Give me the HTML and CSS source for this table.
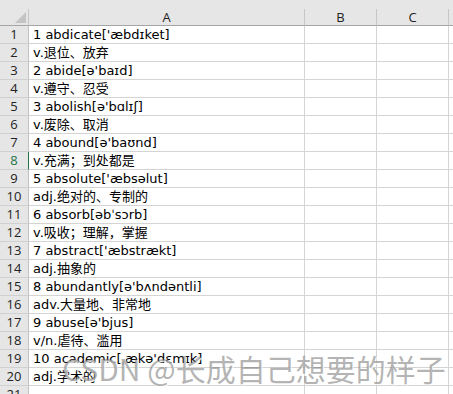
FILE: index.html
```html
<!DOCTYPE html>
<html lang="zh">
<head>
<meta charset="utf-8">
<title>Sheet</title>
<link rel="stylesheet" href="styles.css">
</head>
<body>
<div class="sheet">
  <div class="colhead">
    <div class="corner"><svg class="tri" width="11" height="11" viewBox="0 0 11 11"><polygon points="11,0 11,11 0,11" fill="#c4c4c4"/></svg></div>
    <div class="ch">A</div>
    <div class="ch">B</div>
    <div class="ch">C</div>
    <div class="ch last"></div>
  </div>
  <div class="row"><div class="rh">1</div><div class="cell">1 abdicate['æbdɪket]</div><div class="cell"></div><div class="cell"></div><div class="cell"></div></div>
  <div class="row"><div class="rh">2</div><div class="cell">v.退位、放弃</div><div class="cell"></div><div class="cell"></div><div class="cell"></div></div>
  <div class="row"><div class="rh">3</div><div class="cell">2 abide[ə'baɪd]</div><div class="cell"></div><div class="cell"></div><div class="cell"></div></div>
  <div class="row"><div class="rh">4</div><div class="cell">v.遵守、忍受</div><div class="cell"></div><div class="cell"></div><div class="cell"></div></div>
  <div class="row"><div class="rh">5</div><div class="cell">3 abolish[ə'bɑlɪʃ]</div><div class="cell"></div><div class="cell"></div><div class="cell"></div></div>
  <div class="row"><div class="rh">6</div><div class="cell">v.废除、取消</div><div class="cell"></div><div class="cell"></div><div class="cell"></div></div>
  <div class="row"><div class="rh">7</div><div class="cell">4 abound[ə'baʊnd]</div><div class="cell"></div><div class="cell"></div><div class="cell"></div></div>
  <div class="row"><div class="rh active">8</div><div class="cell">v.充满；到处都是</div><div class="cell"></div><div class="cell"></div><div class="cell"></div></div>
  <div class="row"><div class="rh">9</div><div class="cell">5 absolute['æbsəlut]</div><div class="cell"></div><div class="cell"></div><div class="cell"></div></div>
  <div class="row"><div class="rh">10</div><div class="cell">adj.绝对的、专制的</div><div class="cell"></div><div class="cell"></div><div class="cell"></div></div>
  <div class="row"><div class="rh">11</div><div class="cell">6 absorb[əbˈsɔrb]</div><div class="cell"></div><div class="cell"></div><div class="cell"></div></div>
  <div class="row"><div class="rh">12</div><div class="cell">v.吸收；理解，掌握</div><div class="cell"></div><div class="cell"></div><div class="cell"></div></div>
  <div class="row"><div class="rh">13</div><div class="cell">7 abstract['æbstrækt]</div><div class="cell"></div><div class="cell"></div><div class="cell"></div></div>
  <div class="row"><div class="rh">14</div><div class="cell">adj.抽象的</div><div class="cell"></div><div class="cell"></div><div class="cell"></div></div>
  <div class="row"><div class="rh">15</div><div class="cell">8 abundantly[ə'bʌndəntli]</div><div class="cell"></div><div class="cell"></div><div class="cell"></div></div>
  <div class="row"><div class="rh">16</div><div class="cell">adv.大量地、非常地</div><div class="cell"></div><div class="cell"></div><div class="cell"></div></div>
  <div class="row"><div class="rh">17</div><div class="cell">9 abuse[ə'bjus]</div><div class="cell"></div><div class="cell"></div><div class="cell"></div></div>
  <div class="row"><div class="rh">18</div><div class="cell">v/n.虐待、滥用</div><div class="cell"></div><div class="cell"></div><div class="cell"></div></div>
  <div class="row"><div class="rh">19</div><div class="cell">10 academic[ˌækə'dɛmɪk]</div><div class="cell"></div><div class="cell"></div><div class="cell"></div></div>
  <div class="row"><div class="rh">20</div><div class="cell">adj.学术的</div><div class="cell"></div><div class="cell"></div><div class="cell"></div></div>
  <div class="row"><div class="rh">21</div><div class="cell"></div><div class="cell"></div><div class="cell"></div><div class="cell"></div></div>
  <div class="watermark">CSDN @长成自己想要的样子</div>
</div>
</body>
</html>
```
FILE: styles.css
```css
html, body {
  margin: 0;
  padding: 0;
  background: #ffffff;
  overflow: hidden;
}
.sheet {
  position: relative;
  width: 453px;
  height: 394px;
  overflow: hidden;
}
.colhead,
.row {
  display: grid;
  grid-template-columns: 29px 276px 72px 72px 1fr;
}
.colhead {
  background: #e6e6e6;
  padding-top: 9px;
}
.colhead > div {
  height: 16px;
  border-bottom: 1px solid #a5a5a5;
  border-right: 1px solid #c6c6c6;
}
.colhead > .last {
  border-right: none;
}
.corner {
  display: flex;
  align-items: flex-end;
  justify-content: flex-end;
  padding: 0 2px 2px 0;
  box-sizing: border-box;
  height: 17px !important;
}
.ch {
  font-family: "Open Sans", "Noto Sans", sans-serif;
  font-size: 13px;
  line-height: 16px;
  color: #222222;
  text-align: center;
}
.row {
  height: 18px;
}
.rh {
  background: #e6e6e6;
  border-right: 1px solid #c2c2c2;
  border-bottom: 1px solid #d0d0d0;
  font-family: "Open Sans", "Noto Sans", sans-serif;
  font-size: 13px;
  line-height: 17px;
  color: #222222;
  text-align: center;
}
.rh.active {
  color: #217346;
  border-right-color: #217346;
}
.cell {
  border-right: 1px solid #d4d4d4;
  border-bottom: 1px solid #d4d4d4;
  font-family: "DejaVu Sans", "Noto Sans CJK SC", sans-serif;
  font-size: 13px;
  line-height: 17px;
  color: #000000;
  padding-left: 4px;
  white-space: nowrap;
  overflow: visible;
}
.watermark {
  position: absolute;
  left: 62px;
  top: 350px;
  font-family: "Noto Sans CJK SC", "DejaVu Sans", sans-serif;
  font-size: 30px;
  line-height: 36px;
  color: rgba(105, 105, 105, 0.5);
  text-shadow: 1px 1px 0 rgba(255, 255, 255, 0.8);
  white-space: nowrap;
}
```
